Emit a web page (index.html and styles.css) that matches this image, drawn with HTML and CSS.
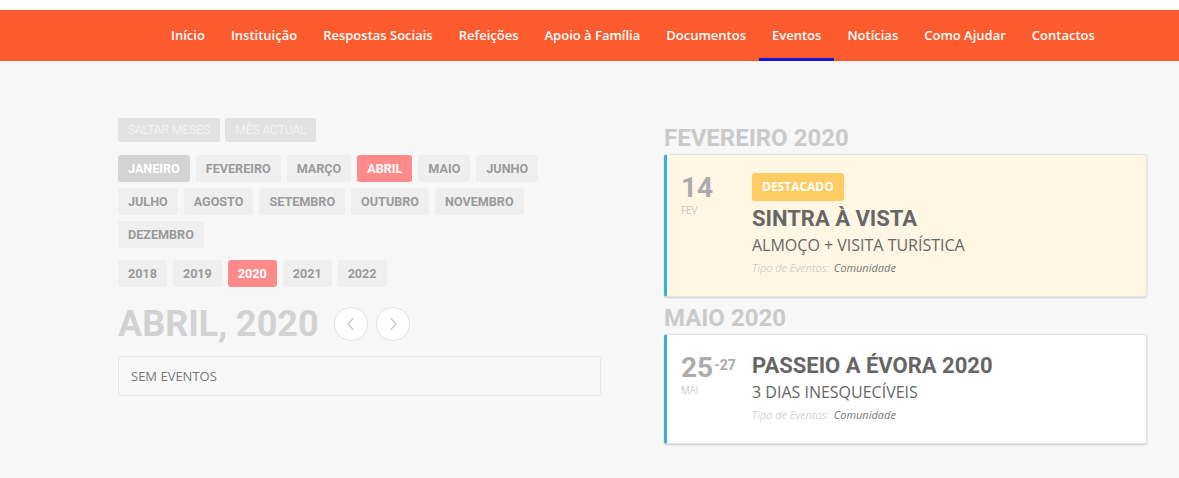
FILE: index.html
```html
<!DOCTYPE html>
<html lang="pt">
<head>
<meta charset="utf-8">
<title>Eventos</title>
<link rel="stylesheet" href="styles.css">
</head>
<body>
<div class="topbar"></div>
<nav class="nav">
  <ul class="menu">
    <li><a href="#">Início</a></li>
    <li><a href="#">Instituição</a></li>
    <li><a href="#">Respostas Sociais</a></li>
    <li><a href="#">Refeições</a></li>
    <li><a href="#">Apoio à Família</a></li>
    <li><a href="#">Documentos</a></li>
    <li><a href="#" class="active">Eventos</a></li>
    <li><a href="#">Notícias</a></li>
    <li><a href="#">Como Ajudar</a></li>
    <li><a href="#">Contactos</a></li>
  </ul>
</nav>
<main class="main">
  <section class="left">
    <div class="jump">
      <span class="jbtn">SALTAR MESES</span>
      <span class="jbtn">MÊS ACTUAL</span>
    </div>
    <div class="months">
      <span class="mbtn past">JANEIRO</span>
      <span class="mbtn">FEVEREIRO</span>
      <span class="mbtn">MARÇO</span>
      <span class="mbtn current">ABRIL</span>
      <span class="mbtn">MAIO</span>
      <span class="mbtn">JUNHO</span>
      <span class="mbtn">JULHO</span>
      <span class="mbtn">AGOSTO</span>
      <span class="mbtn">SETEMBRO</span>
      <span class="mbtn">OUTUBRO</span>
      <span class="mbtn">NOVEMBRO</span>
      <span class="mbtn">DEZEMBRO</span>
    </div>
    <div class="years">
      <span class="mbtn">2018</span>
      <span class="mbtn">2019</span>
      <span class="mbtn current">2020</span>
      <span class="mbtn">2021</span>
      <span class="mbtn">2022</span>
    </div>
    <div class="title-row">
      <h1 class="cal-title">ABRIL, 2020</h1>
      <span class="circle"><svg width="10" height="14" viewBox="0 0 10 14"><path d="M7 1.5 L2 7 L7 12.5" fill="none" stroke="#c8c8c8" stroke-width="1.3"/></svg></span>
      <span class="circle"><svg width="10" height="14" viewBox="0 0 10 14"><path d="M3 1.5 L8 7 L3 12.5" fill="none" stroke="#c8c8c8" stroke-width="1.3"/></svg></span>
    </div>
    <div class="empty">SEM EVENTOS</div>
  </section>
  <section class="right">
    <h2 class="month-head">FEVEREIRO 2020</h2>
    <article class="event featured">
      <div class="date">
        <div class="day">14</div>
        <div class="mon">FEV</div>
      </div>
      <div class="info">
        <span class="badge">DESTACADO</span>
        <h3 class="ev-title">SINTRA À VISTA</h3>
        <p class="ev-sub">ALMOÇO + VISITA TURÍSTICA</p>
        <p class="ev-meta"><span class="lbl">Tipo de Eventos:</span> <span class="val">Comunidade</span></p>
      </div>
    </article>
    <h2 class="month-head">MAIO 2020</h2>
    <article class="event">
      <div class="date">
        <div class="day">25<sup class="to">-27</sup></div>
        <div class="mon">MAI</div>
      </div>
      <div class="info">
        <h3 class="ev-title">PASSEIO A ÉVORA 2020</h3>
        <p class="ev-sub">3 DIAS INESQUECÍVEIS</p>
        <p class="ev-meta"><span class="lbl">Tipo de Eventos:</span> <span class="val">Comunidade</span></p>
      </div>
    </article>
  </section>
</main>
</body>
</html>
```
FILE: styles.css
```css
* { box-sizing: border-box; }
html, body { margin: 0; padding: 0; }
body {
  background: #f7f7f7;
  font-family: "Open Sans", "Liberation Sans", sans-serif;
  color: #666;
  height: 478px;
  overflow: hidden;
}
.topbar { height: 10px; background: #ffffff; }
.nav { background: #fc5b2d; height: 51px; }
.menu {
  list-style: none;
  margin: 0;
  padding: 0 0 0 158px;
  display: flex;
  height: 51px;
}
.menu a {
  display: block;
  padding: 0 13px;
  line-height: 51px;
  height: 51px;
  color: #ffffff;
  text-decoration: none;
  font-size: 13px;
  font-weight: 600;
}
.menu a.active { box-shadow: inset 0 -3px 0 #1b14d6; }

.main {
  display: flex;
  padding: 57px 0 0 118px;
}
.left { width: 483px; }
.right { width: 483px; margin-left: 63px; padding-top: 7px; }

.jump { display: flex; gap: 5px; }
.jbtn {
  height: 24px;
  line-height: 24px;
  padding: 0 10px;
  background: #e2e2e2;
  color: #f9f9f9;
  font-family: Roboto, "Liberation Sans", sans-serif;
  font-weight: 300;
  font-size: 12px;
  border-radius: 2px;
}
.months { display: flex; flex-wrap: wrap; gap: 6px; margin-top: 13px; }
.years { display: flex; gap: 6px; margin-top: 12px; }
.mbtn {
  height: 27px;
  line-height: 27px;
  padding: 0 10px;
  background: #efefef;
  color: #9a9a9a;
  font-family: Roboto, "Liberation Sans", sans-serif;
  font-weight: 700;
  font-size: 12.6px;
  border-radius: 3px;
}
.mbtn.past { background: #d3d3d3; color: #ffffff; }
.mbtn.current { background: #ff8a8a; color: #ffffff; }

.title-row { display: flex; align-items: center; margin-top: 17px; }
.cal-title {
  margin: 0;
  font-family: Roboto, "Liberation Sans", sans-serif;
  font-weight: 700;
  font-size: 36px;
  line-height: 40px;
  color: #d2d2d2;
}
.circle {
  width: 34px;
  height: 34px;
  border-radius: 50%;
  background: #ffffff;
  border: 1px solid #e2e2e2;
  display: flex;
  align-items: center;
  justify-content: center;
  margin-left: 8px;
}
.cal-title + .circle { margin-left: 15px; }
.empty {
  margin-top: 12px;
  height: 40px;
  line-height: 38px;
  border: 1px solid #e6e6e6;
  border-radius: 3px;
  padding: 0 12px;
  font-size: 13px;
  color: #777;
  background: #f7f7f7;
}

.month-head {
  margin: 8px 0 3px;
  font-family: Roboto, "Liberation Sans", sans-serif;
  font-weight: 700;
  font-size: 24px;
  line-height: 26px;
  color: #cacaca;
}
.month-head:first-child { margin-top: 0; }
.event {
  display: flex;
  background: #ffffff;
  border: 1px solid #e3e3e3;
  border-left: 3px solid #3ab0d5;
  border-radius: 3px;
  padding: 18px 14px 20px;
  box-shadow: 0 1px 2px rgba(0,0,0,0.18);
}
.event.featured { background: #fff6e4; }
.date { width: 71px; flex: none; color: #acacac; }
.day {
  font-family: Roboto, "Liberation Sans", sans-serif;
  font-weight: 700;
  font-size: 28px;
  line-height: 30px;
}
.to {
  font-size: 14px;
  vertical-align: top;
  position: relative;
  top: -3px;
  margin-left: 1px;
}
.mon { font-size: 10px; font-weight: 300; line-height: 12px; margin-top: 1px; }
.info { flex: 1; }
.badge {
  display: inline-block;
  height: 28px;
  line-height: 28px;
  padding: 0 10px;
  background: #ffcb63;
  color: #ffffff;
  font-weight: 700;
  font-size: 12px;
  border-radius: 3px;
  margin-bottom: 5px;
}
.ev-title {
  margin: 0;
  font-family: Roboto, "Liberation Sans", sans-serif;
  font-weight: 700;
  font-size: 22px;
  line-height: 26px;
  color: #666;
}
.ev-sub {
  margin: 2px 0 0;
  font-size: 16px;
  line-height: 22px;
  color: #666;
}
.ev-meta {
  margin: 4px 0 0;
  font-size: 11px;
  line-height: 16px;
  font-style: italic;
}
.ev-meta .lbl { color: #bdbdbd; font-weight: 300; }
.ev-meta .val { color: #777; margin-left: 2px; }
```
